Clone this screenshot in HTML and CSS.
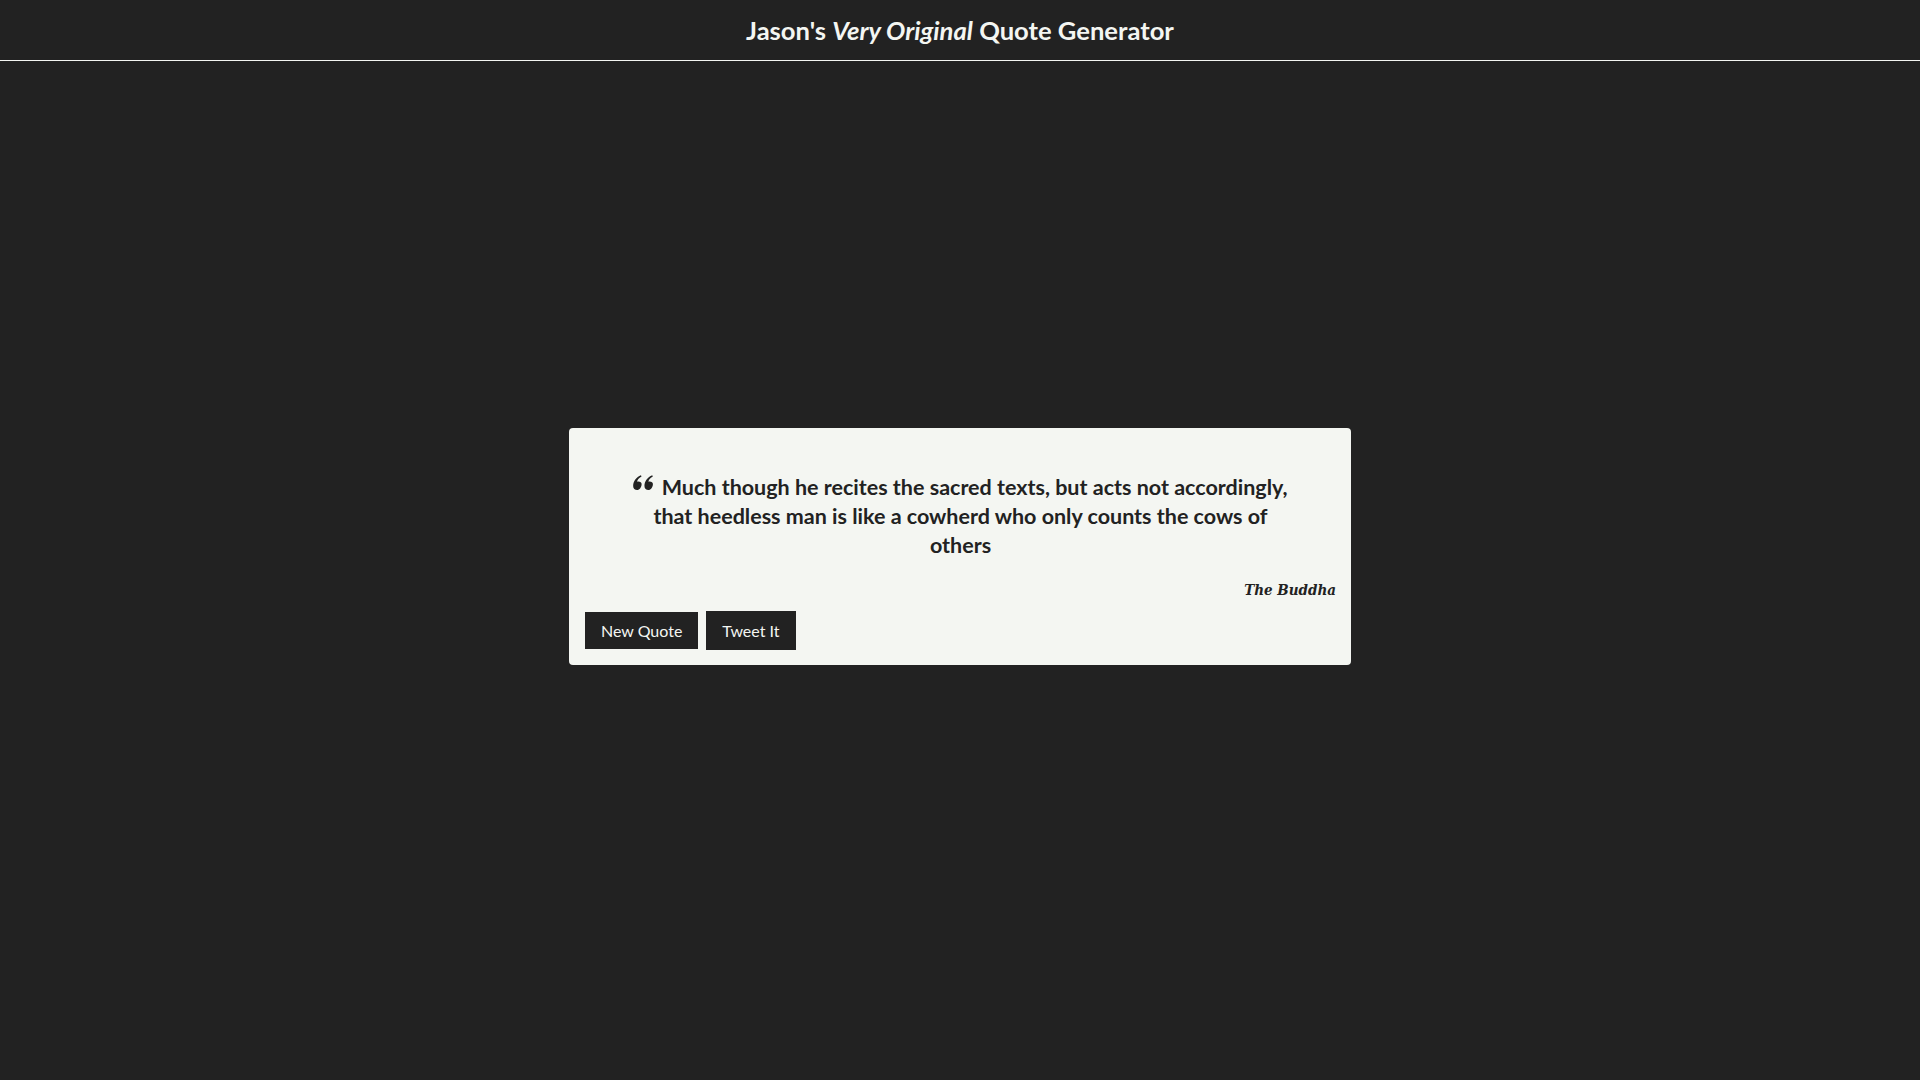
FILE: index.html
```html
<!DOCTYPE html>
<html lang="en">
<head>
<meta charset="utf-8">
<title>Quote Generator</title>
<link rel="stylesheet" href="styles.css">
</head>
<body>
<header class="topbar">
  <h1 class="title">Jason's <em>Very Original</em> Quote Generator</h1>
</header>
<main class="stage">
  <section class="card">
    <blockquote class="quote">
      <p class="quote-text"><svg class="quote-mark" viewBox="0 0 22 17" width="21" height="16" aria-hidden="true"><path d="M9 9.5c0 3.2-2.2 6.5-4.8 6.5C1.8 16 0 14.3 0 11.6 0 6.8 3.4 2 8.3 0.3l0.6 1.2C6 3 4.3 5 4.2 7.3c0.4-0.2 0.8-0.3 1.3-0.3C7.6 7 9 8.1 9 9.5zM21 9.5c0 3.2-2.2 6.5-4.8 6.5-2.4 0-4.2-1.7-4.2-4.4 0-4.8 3.4-9.6 8.3-11.3l0.6 1.2C18 3 16.3 5 16.2 7.3c0.4-0.2 0.8-0.3 1.3-0.3 2.1 0 3.5 1.1 3.5 2.5z"/></svg> Much though he recites the sacred texts, but acts not accordingly, that heedless man is like a cowherd who only counts the cows of others</p>
      <footer class="author">The Buddha</footer>
    </blockquote>
    <div class="actions">
      <button class="btn btn-new" type="button">New Quote</button>
      <a class="btn btn-tweet" href="#">Tweet It</a>
    </div>
  </section>
</main>
</body>
</html>
```

FILE: styles.css
```css
* { box-sizing: border-box; }
html, body {
  margin: 0;
  padding: 0;
  background: #222222;
  height: 100%;
}
body {
  font-family: Lato, "Open Sans", sans-serif;
  color: #f4f6f2;
}
.topbar {
  height: 61px;
  border-bottom: 1px solid #f4f6f2;
  display: flex;
  align-items: center;
  justify-content: center;
}
.title {
  margin: 0;
  font-size: 25.6px;
  font-weight: 700;
  line-height: 1;
  padding-top: 1px;
}
.title em { font-style: italic; }
.stage {
  display: flex;
  flex-direction: column;
  align-items: center;
  padding-top: 367px;
}
.card {
  width: 782px;
  background: #f4f6f2;
  color: #222222;
  border-radius: 4px;
  padding: 45px 15px 15px 16px;
}
.quote {
  margin: 0;
}
.quote-text {
  margin: 0 auto;
  max-width: 672px;
  text-align: center;
  font-size: 21.5px;
  font-weight: 700;
  line-height: 29px;
}
.quote-mark {
  fill: #222222;
  vertical-align: 4px;
  margin-right: 2px;
}
.author {
  margin-top: 20px;
  text-align: right;
  font-family: "DejaVu Serif Condensed", "DejaVu Serif", "Liberation Serif", serif;
  font-style: italic;
  font-weight: 700;
  font-size: 15px;
  line-height: 20px;
}
.actions {
  display: flex;
  align-items: center;
  gap: 8px;
  margin-top: 11px;
}
.btn {
  font-family: Lato, sans-serif;
  font-size: 16px;
  color: #f4f6f2;
  background: #222222;
  border: none;
  border-radius: 0;
  text-decoration: none;
  line-height: 19px;
  cursor: pointer;
  white-space: nowrap;
}
.btn-new {
  padding: 9px 16px;
}
.btn-tweet {
  padding: 10px 16px;
}
```
